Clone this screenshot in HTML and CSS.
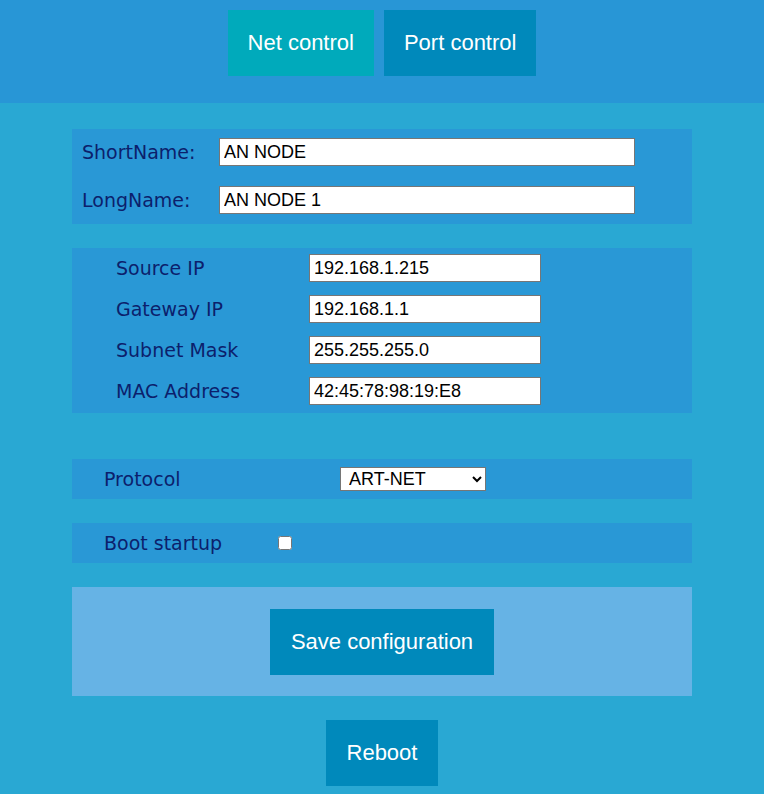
FILE: index.html
```html
<!DOCTYPE html>
<html lang="en">
<head>
    <meta charset="UTF-8">
    <meta name="viewport" content="width=device-width, initial-scale=1.0">
    <title>Node Config</title>
    <link rel="stylesheet" href="styles.css">
</head>
<body>
    <header class="top-bar">
        <button class="tab tab-active">Net control</button>
        <button class="tab">Port control</button>
    </header>

    <main class="content">
        <div class="panel names">
            <label for="shortName">ShortName:</label>
            <input type="text" id="shortName" value="AN NODE">
            <label for="longName">LongName:</label>
            <input type="text" id="longName" value="AN NODE 1">
        </div>

        <div class="panel network">
            <label for="sourceIp">Source IP</label>
            <input type="text" id="sourceIp" value="192.168.1.215">
            <label for="gatewayIp">Gateway IP</label>
            <input type="text" id="gatewayIp" value="192.168.1.1">
            <label for="subnetMask">Subnet Mask</label>
            <input type="text" id="subnetMask" value="255.255.255.0">
            <label for="macAddress">MAC Address</label>
            <input type="text" id="macAddress" value="42:45:78:98:19:E8">
        </div>

        <div class="panel row protocol">
            <label for="protocol">Protocol</label>
            <select id="protocol">
                <option>ART-NET</option>
                <option>sACN</option>
            </select>
        </div>

        <div class="panel row boot">
            <label for="bootStartup">Boot startup</label>
            <input type="checkbox" id="bootStartup">
        </div>

        <div class="panel save">
            <button class="btn">Save configuration</button>
        </div>

        <div class="reboot">
            <button class="btn">Reboot</button>
        </div>
    </main>
</body>
</html>
```

FILE: styles.css
```css
* {
    margin: 0;
    padding: 0;
    box-sizing: border-box;
}

html, body {
    width: 100%;
    height: 100%;
    background-color: #29a8d3;
    font-family: 'DejaVu Sans', Verdana, sans-serif;
}

.top-bar {
    display: flex;
    justify-content: center;
    gap: 10px;
    padding: 10px 0 27px;
    background-color: #2896d6;
}

.tab, .btn {
    border: none;
    color: #ffffff;
    font-family: 'Liberation Sans', Arial, sans-serif;
    font-size: 22px;
    line-height: 26px;
    padding: 20px;
    background-color: #0089bb;
    cursor: pointer;
}

.btn {
    padding: 20px 21px;
}

.tab-active {
    background-color: #00aabb;
}

.content {
    width: 620px;
    margin: 26px auto 0;
    display: flex;
    flex-direction: column;
    gap: 24px;
}

.panel {
    background-color: #2998d6;
}

.panel label {
    color: #0c1f6c;
    font-size: 19px;
}

input[type="text"], select {
    height: 28px;
    padding: 1px 4px;
    border: 1px solid #767676;
    font-family: 'Liberation Sans', Arial, sans-serif;
    font-size: 18px;
    color: #000;
    background: #fff;
}

.names {
    display: grid;
    grid-template-columns: 137px 416px;
    row-gap: 20px;
    align-items: center;
    padding: 9px 10px 10px;
}

.network {
    display: grid;
    grid-template-columns: 193px 232px;
    row-gap: 13px;
    align-items: center;
    padding: 6px 44px 8px;
}

.row {
    display: flex;
    align-items: center;
    height: 40px;
    padding-left: 32px;
}

.protocol {
    margin-top: 22px;
}

.protocol label {
    width: 236px;
}

.protocol select {
    width: 146px;
    height: 24px;
    padding: 0 4px;
}

.boot label {
    width: 174px;
}

.boot input {
    width: 14px;
    height: 14px;
    margin: 0;
}

.save {
    display: flex;
    justify-content: center;
    padding: 22px 0 21px;
    background-color: #66b3e5;
}

.reboot {
    display: flex;
    justify-content: center;
}
```
